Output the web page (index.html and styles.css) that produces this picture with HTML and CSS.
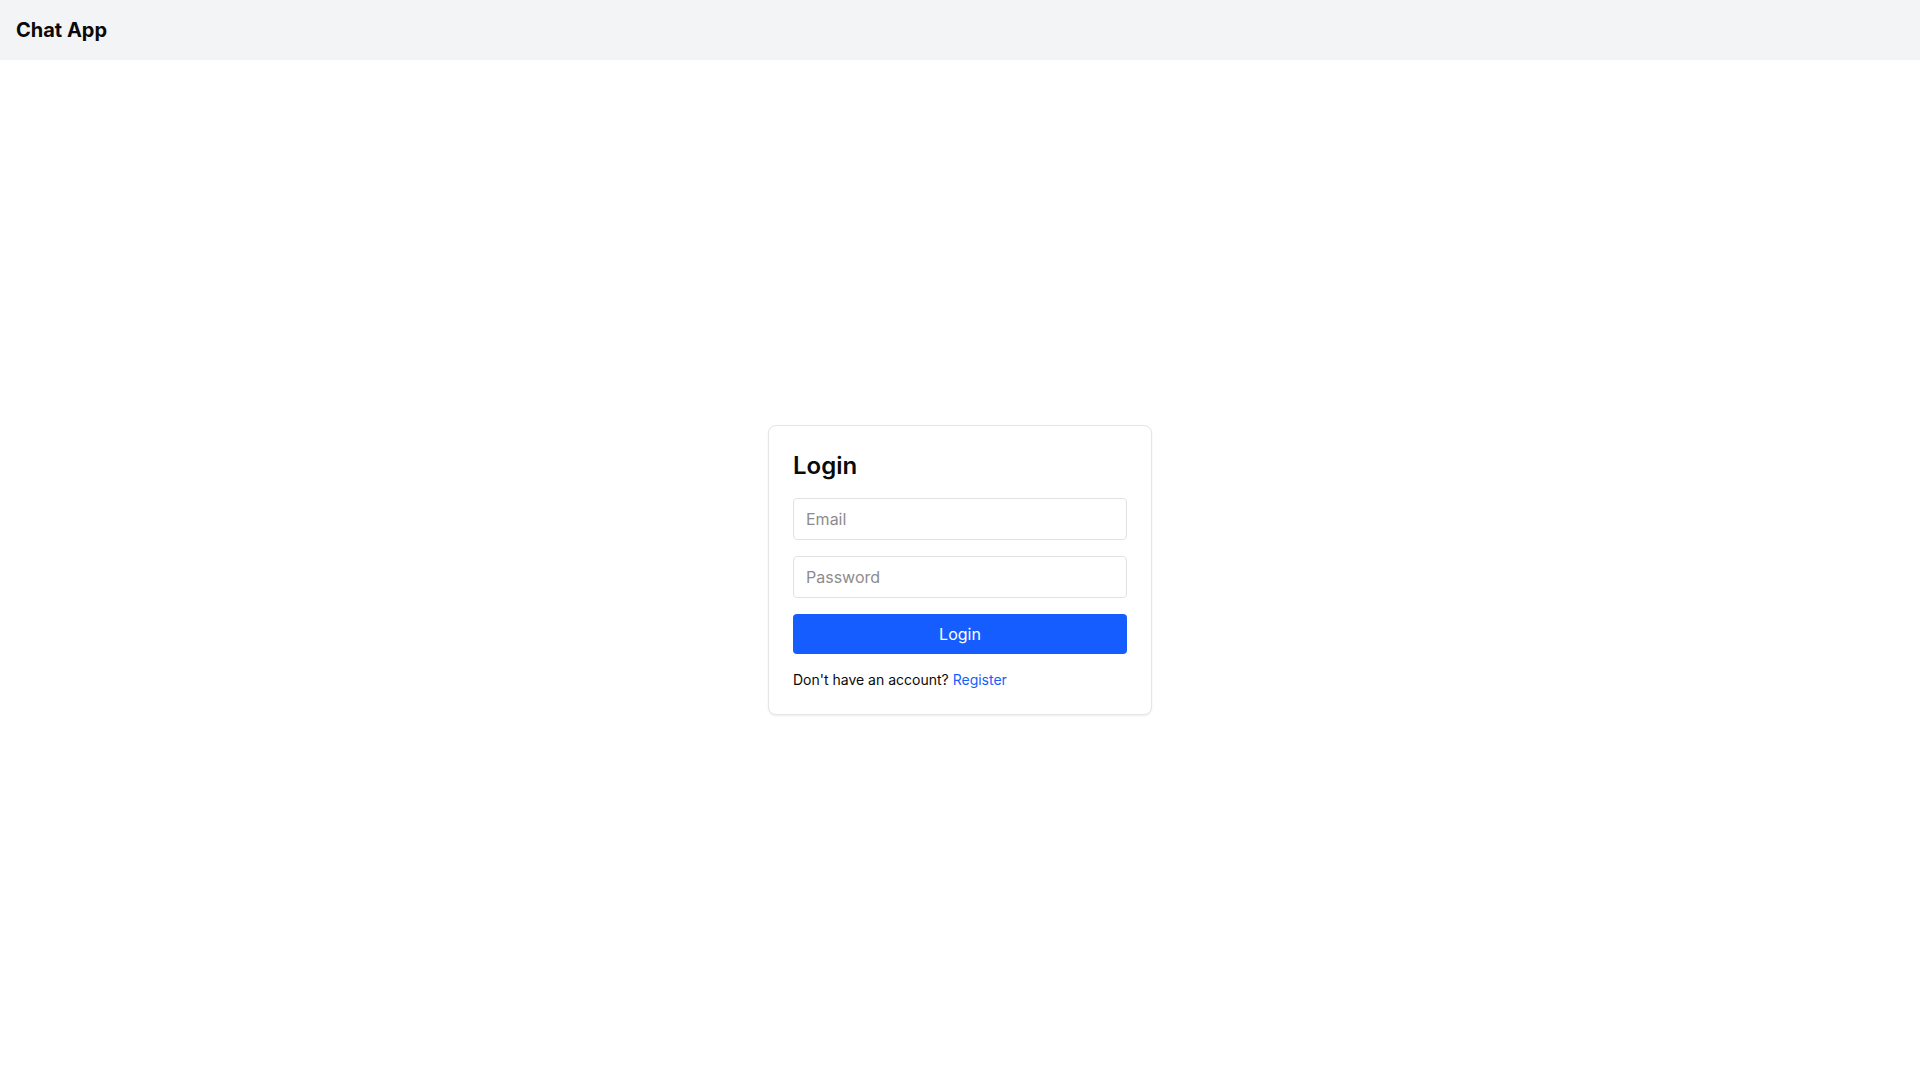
FILE: index.html
```html
<!DOCTYPE html>
<html lang="en">
<head>
<meta charset="utf-8">
<title>Chat App</title>
<link rel="stylesheet" href="styles.css">
</head>
<body>
<div class="app">
  <header class="topbar">
    <h1 class="brand">Chat App</h1>
  </header>
  <main class="main">
    <form class="card">
      <h2 class="title">Login</h2>
      <input class="field" type="email" placeholder="Email">
      <input class="field" type="password" placeholder="Password">
      <button class="btn" type="button">Login</button>
      <p class="note">Don't have an account? <a class="link" href="#">Register</a></p>
    </form>
  </main>
</div>
</body>
</html>
```

FILE: styles.css
```css
* { box-sizing: border-box; }
html, body { margin: 0; padding: 0; height: 100%; }
body {
  font-family: Inter, "Noto Sans", sans-serif;
  color: #0a0a0a;
  background: #ffffff;
}
.app {
  display: flex;
  flex-direction: column;
  min-height: 100vh;
}
.topbar {
  height: 60px;
  background: #f3f4f6;
  display: flex;
  align-items: center;
  padding: 0 16px;
  flex-shrink: 0;
}
.brand {
  margin: 0;
  font-size: 20px;
  line-height: 28px;
  font-weight: 700;
  color: #0a0a0a;
}
.main {
  flex: 1;
  display: flex;
  align-items: center;
  justify-content: center;
}
.card {
  width: 384px;
  border: 1px solid #e5e5e5;
  border-radius: 8px;
  background: #fff;
  padding: 24px;
  display: flex;
  flex-direction: column;
  gap: 16px;
  box-shadow: 0 1px 2px rgba(0,0,0,0.08);
}
.title {
  margin: 0;
  font-size: 24px;
  line-height: 32px;
  font-weight: 600;
  color: #0a0a0a;
}
.field {
  display: block;
  width: 100%;
  height: 42px;
  border: 1px solid #e2e2e2;
  border-radius: 4px;
  padding: 8px 12px;
  font-family: inherit;
  font-size: 16px;
  line-height: 24px;
  color: #0a0a0a;
  background: #fff;
  outline: none;
}
.field::placeholder { color: #8c8c8c; }
.btn {
  height: 40px;
  border: none;
  border-radius: 4px;
  background: #165dff;
  color: #ffffff;
  font-family: inherit;
  font-size: 16px;
  line-height: 24px;
  cursor: pointer;
}
.note {
  margin: 0;
  font-size: 14px;
  line-height: 20px;
  color: #0a0a0a;
}
.link {
  color: #165dff;
  text-decoration: none;
}
```
